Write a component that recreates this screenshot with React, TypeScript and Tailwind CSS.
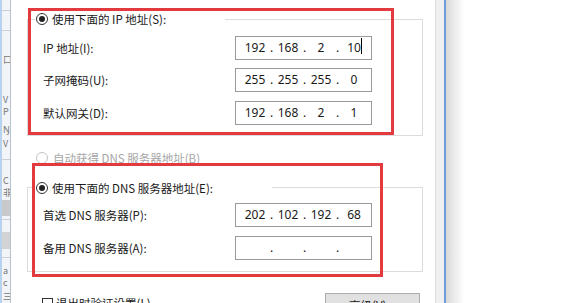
import React from "react";

const CJK = "font-['Noto_Sans_CJK_SC','Noto_Sans',sans-serif]";

function Radio({ checked, disabled }: { checked?: boolean; disabled?: boolean }) {
  return (
    <span
      className={`flex h-[12px] w-[12px] shrink-0 items-center justify-center rounded-full border bg-white ${
        disabled ? "border-[#c4c4c4]" : "border-[#333333]"
      }`}
    >
      {checked && <span className="h-[6px] w-[6px] rounded-full bg-[#222222]" />}
    </span>
  );
}

function IpBox({ parts, cursor }: { parts: string[]; cursor?: boolean }) {
  return (
    <div className="flex h-[24px] w-[137px] items-center border border-[#9a9a9a] bg-white pl-[4px] font-['Noto_Sans',sans-serif] text-[12px] leading-[16px] text-[#1a1a1a]">
      {parts.map((p, i) => (
        <React.Fragment key={i}>
          <span className="w-[30px] text-center">
            <span className="relative">
              {p}
              {cursor && i === 3 && (
                <span className="absolute left-full top-[-1px] h-[16px] w-px bg-black" />
              )}
            </span>
          </span>
          {i < 3 && <span className="w-[3px] text-center">.</span>}
        </React.Fragment>
      ))}
    </div>
  );
}

function Row({ label, parts, cursor, className }: { label: string; parts: string[]; cursor?: boolean; className?: string }) {
  return (
    <div className={`flex h-[24px] items-center pl-[15px] ${className ?? ""}`}>
      <span className="w-[192px] text-[#1a1a1a]">{label}</span>
      <IpBox parts={parts} cursor={cursor} />
    </div>
  );
}

function LeftStrip() {
  return (
    <div className="relative flex w-[11px] shrink-0 flex-col overflow-hidden border-r border-[#b8c3cf] bg-[#f2f4f7] text-[9px] leading-[10px] text-[#777]">
      <div className="absolute left-0 top-0 h-full w-[2px] bg-[#b6d2ee]" />
      <div className="mt-[10px] h-px w-full bg-[#c9d0d8]" />
      <div className="mt-[19px] h-px w-full bg-[#c9d0d8]" />
      <div className="mt-[24px] pl-[3px]">口</div>
      <div className="mt-[30px] pl-[3px]">V</div>
      <div className="mt-[2px] pl-[3px]">P</div>
      <div className="mt-[8px] pl-[3px]">Ŋ</div>
      <div className="mt-[4px] pl-[3px]">V</div>
      <div className="mt-[10px] h-px w-full bg-[#c9d0d8]" />
      <div className="mt-[16px] pl-[3px]">C</div>
      <div className="mt-[2px] pl-[3px]">非</div>
      <div className="mt-[2px] h-[16px] w-full bg-[#c9c9c9]" />
      <div className="mt-[3px] h-px w-full bg-[#c9d0d8]" />
      <div className="mt-[12px] h-[17px] w-full bg-[#d3d3d3]" />
      <div className="mt-[8px] h-px w-full bg-[#c9d0d8]" />
      <div className="mt-[8px] pl-[3px]">a</div>
      <div className="mt-[2px] pl-[3px]">c</div>
      <div className="mt-[4px] pl-[3px]">三</div>
    </div>
  );
}

export default function App() {
  return (
    <div className={`relative flex h-[303px] w-[569px] overflow-hidden bg-white ${CJK} text-[11.5px] leading-[14px]`}>
      <LeftStrip />

      <div className="flex w-[424px] shrink-0 flex-col bg-white">
        {/* Group 1 */}
        <div className="ml-[16px] mt-[19px] flex w-[396px] flex-col border border-[#dcdcdc] pb-[10px]">
          <div className="-mt-[8px] ml-[7px] flex h-[13px] w-[190px] items-center gap-[4px] bg-white pl-[1px]">
            <Radio checked />
            <span className="text-[#1a1a1a]">使用下面的 IP 地址(S):</span>
          </div>
          <Row className="mt-[11px]" label="IP 地址(I):" parts={["192", "168", "2", "10"]} cursor />
          <Row className="mt-[8px]" label="子网掩码(U):" parts={["255", "255", "255", "0"]} />
          <Row className="mt-[9px]" label="默认网关(D):" parts={["192", "168", "2", "1"]} />
        </div>

        {/* Auto DNS radio */}
        <div className="ml-[25px] mt-[15px] flex h-[14px] items-center gap-[5px]">
          <Radio disabled />
          <span className="text-[#a6a6a6]">自动获得 DNS 服务器地址(B)</span>
        </div>

        {/* Group 2 */}
        <div className="ml-[16px] mt-[22px] flex w-[396px] flex-col border border-[#dcdcdc] pb-[11px]">
          <div className="-mt-[7px] ml-[7px] flex h-[14px] w-[237px] items-center gap-[4px] bg-white pl-[1px]">
            <Radio checked />
            <span className="text-[#1a1a1a]">使用下面的 DNS 服务器地址(E):</span>
          </div>
          <Row className="mt-[8px]" label="首选 DNS 服务器(P):" parts={["202", "102", "192", "68"]} />
          <Row className="mt-[9px]" label="备用 DNS 服务器(A):" parts={["", "", "", ""]} />
        </div>

        {/* Bottom row */}
        <div className="mt-[21px] flex items-start">
          <div className="ml-[31px] mt-[3px] flex items-center gap-[3px]">
            <span className="h-[11px] w-[11px] border border-[#333333] bg-white" />
            <span className="text-[#1a1a1a]">退出时验证设置(L)</span>
          </div>
          <div className="ml-auto mr-[15px] flex h-[23px] w-[95px] items-center justify-center border border-[#adadad] bg-[#e1e1e1] text-[#1a1a1a]">
            高级(V)...
          </div>
        </div>
      </div>

      {/* Window edge */}
      <div className="w-[9px] shrink-0 border-l border-[#dedede] bg-[#f0f0f0]" />
      <div className="w-[2px] shrink-0 bg-[#6d9ed9]" />
      <div className="w-[18px] shrink-0 bg-gradient-to-r from-[#d9d9d9] to-white" />
      <div className="flex-1 bg-white" />

      {/* Red annotation boxes */}
      <div className="pointer-events-none absolute left-[28px] top-[8px] h-[127px] w-[366px] border-[3px] border-[#e23a3f]" />
      <div className="pointer-events-none absolute left-[32px] top-[163px] h-[114px] w-[351px] border-[3px] border-[#e23a3f]" />
    </div>
  );
}
